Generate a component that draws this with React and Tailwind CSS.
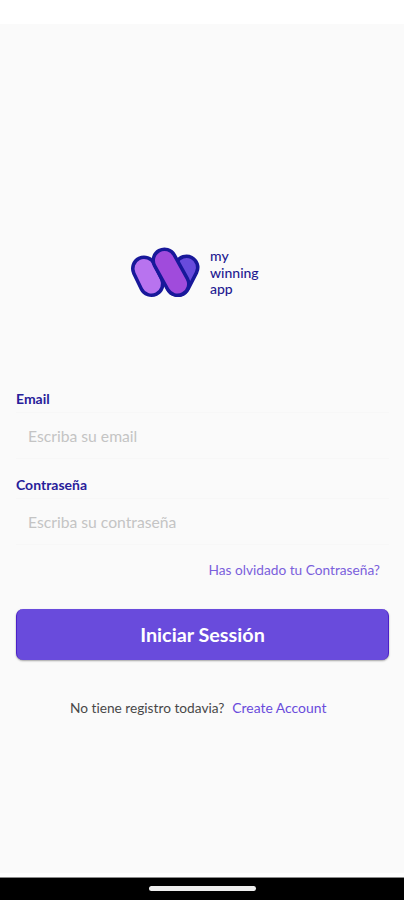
import React, { useState } from "react";

export default function Login() {
  const [email, setEmail] = useState("");
  const [password, setPassword] = useState("");

  return (
    <div className="h-[900px] w-full flex flex-col bg-[#fafafa] font-['Lato',sans-serif] [font-variant-ligatures:none] overflow-hidden">
      {/* Status bar */}
      <div className="h-6 shrink-0 bg-white" />

      <main className="flex-1 flex flex-col px-4">
        <div className="mt-[222px] flex items-center pl-[114px]">
          <Logo />
          <p className="ml-2 text-[14px] leading-[16.6px] font-medium text-[#1f1a91]">
            my
            <br />
            winning
            <br />
            app
          </p>
        </div>

        <form className="mt-[89px] flex flex-col" onSubmit={(e) => e.preventDefault()}>
          <Field
            label="Email"
            type="email"
            placeholder="Escriba su email"
            value={email}
            onChange={setEmail}
          />
          <div className="h-4" />
          <Field
            label="Contraseña"
            type="password"
            placeholder="Escriba su contraseña"
            value={password}
            onChange={setPassword}
          />

          <a href="#" className="mt-[15px] mr-2 self-end text-[13.7px] leading-5 text-[#7a60dc]">
            Has olvidado tu Contraseña?
          </a>

          <button
            type="submit"
            className="mt-[29px] mr-[-1px] h-[51px] rounded-[7px] border-x border-[#4b20c8] bg-[#694bdc] text-[19.8px] font-bold text-white shadow-[0_1px_2px_rgba(0,0,0,0.35)]"
          >
            Iniciar Sessión
          </button>
        </form>

        <p className="mt-[38px] ml-[54px] flex gap-2 text-[13.7px] leading-5 text-[#484848]">
          <span>No tiene registro todavia?</span>
          <a href="#" className="text-[13.9px] text-[#694bdc]">
            Create Account
          </a>
        </p>
      </main>

      {/* Navigation bar */}
      <div className="h-[27px] shrink-0 bg-white pt-1">
        <div className="h-[23px] border-t border-[#8a8a8a] bg-black flex justify-center pt-2">
          <div className="h-[5px] w-[107px] rounded-full bg-[#eeeeee]" />
        </div>
      </div>
    </div>
  );
}

function Field({ label, type, placeholder, value, onChange }) {
  return (
    <label className="flex flex-col">
      <span className="text-[14px] leading-5 font-bold text-[#28209a]">{label}</span>
      <input
        type={type}
        placeholder={placeholder}
        value={value}
        onChange={(e) => onChange(e.target.value)}
        className="mt-[3px] mr-[-1px] h-[47px] border-y border-[#f7f7f7] px-3 pt-px text-[15.7px] text-[#484848] placeholder:text-[#c4c4c4] outline-none"
      />
    </label>
  );
}

function Logo() {
  return (
    <svg width="72" height="54" viewBox="0 0 72 54" fill="none" strokeLinecap="round">
      {/* right bar */}
      <path d="M56.5 21.5L48 38" stroke="#18189a" strokeWidth="26" />
      <path d="M56.5 21.5L48 38" stroke="#684bdc" strokeWidth="19" />
      {/* left bar */}
      <path d="M14 22.5L21.5 38" stroke="#18189a" strokeWidth="26" />
      <path d="M14 22.5L21.5 38" stroke="#b873ef" strokeWidth="19" />
      {/* middle bar */}
      <path d="M34.5 14.5L47.5 38" stroke="#18189a" strokeWidth="26" />
      <path d="M34.5 14.5L47.5 38" stroke="#a04bdc" strokeWidth="19" />
    </svg>
  );
}
